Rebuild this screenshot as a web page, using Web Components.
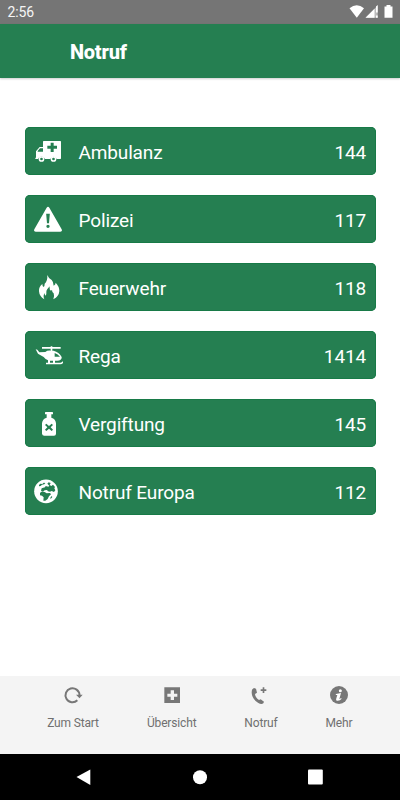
<!DOCTYPE html>
<html lang="de"><head><meta charset="utf-8"><title>Notruf</title>
<style>html,body{margin:0;height:100%;background:#fff;font-family:Roboto,sans-serif}</style></head>
<body><emergency-app></emergency-app>
<script>
const icons = {
 ambulance:`<path fill-rule="evenodd" d="M71 63H121Q123 63 123 65V115Q123 117 121 117H110A10 10 0 0 0 91 117H75A11 11 0 0 0 54 117H46V113H48V94L59 81H69V65Q69 63 71 63ZM92 68V77H82V86H92V96H101V86H111V77H101V68ZM60 85L53 93V95H69V85Z"/><g fill="none" stroke="#fff" stroke-width="4.5"><circle cx="64.5" cy="117" r="6.3"/><circle cx="100.500" cy="117" r="6.3"/></g>`,
 warning:`<path fill-rule="evenodd" d="M80 59Q84 53 88 59L125 124Q128 131 121 131H47Q40 131 43 124ZM78.500 77L81 106H87L89.500 77ZM84 110A5 5 0 1 0 84 120A5 5 0 1 0 84 110Z"/>`,
 fire:`<path d="M82 57Q86 68 95 72Q101 78 101 89Q107 86 107 80Q118 91 118 105Q117 121 100 130Q104 120 101 112Q96 109 96 102Q89 107 89 97Q88 94 90 91Q79 100 79 108Q80 115 77 119Q73 116 74 111Q68 119 73 130Q58 121 57 106Q56 92 67 84Q67 91 71 93Q74 91 74 83Q83 76 82 57Z"/>`,
 helicopter:`<path fill-rule="evenodd" d="M66 69H92V67H97V69H122V74H97V80H101Q117 84 125 99Q126 109 112 110H105V116H121Q126 116 128 112L130 115Q128 121 121 121H78V116H84V109Q77 107 71 99L54 89L47 76L52 77L58 85L76 84Q82 79 92 80V74H66ZM90 110V116H99V110ZM104 87V98H120Q114 90 104 87Z"/>`,
 poison:`<path fill-rule="evenodd" d="M77 60Q75 60 75 62V67H80V77Q67 81 66 94V125Q67 131 73 131H102Q108 131 108 125V94Q107 81 94 77V67H99V62Q99 60 97 60ZM79 95L87 102L95 95L99 99L92 106L99 113L95 117L87 110L79 117L75 113L82 106L75 99Z"/>`,
 globe:`<circle cx="78" cy="94" r="35.5"/><path fill="#257f51" d="M57 75L61 71L67 72L71 68L76 69L73 73L66 74L62 78L57 79ZM82 71L86 67L92 69L89 75L94 78L99 74L105 81L103 85L106 91L102 96L95 93L90 95L84 94L81 90L74 91L69 95L63 92L65 85L75 82L77 78L85 80L88 77ZM60 99L64 95L74 96L80 100L90 99L93 103L87 109L83 117L76 122L70 122L71 112L66 107L60 106ZM91 113L95 108L97 111L92 117Z"/>`,
 restart:`<path fill="none" stroke="#777" stroke-width="6" d="M142 91A21 21 0 1 1 148.500 75"/><path fill="#777" d="M138 74H158L148.500 85Z"/>`,
 plus:`<path fill="#777" fill-rule="evenodd" d="M402 52H449V99H402ZM421 61V71H411V80H421V90H431V80H441V71H431V61Z"/>`,
 phone:`<path fill="#777" d="M97 58L102 54L108 56L111 68L105 72Q106 83 117 90L122 88L132 95L130 100Q124 104 115 99Q96 87 95 68Q95 61 97 58ZM128 52H133V58H139V63H133V69H128V63H122V58H128Z"/>`,
 info:`<circle cx="357" cy="75" r="27" fill="#777"/><circle cx="361" cy="62" r="4.500"/><path d="M348 72L363 69L358 87Q360 87 363 84L365 86Q359 94 350 92Q347 90 349 85L352 75H347Z"/>`
};
class AppIcon extends HTMLElement{connectedCallback(){
 const size=this.getAttribute('size')||30;
 this.attachShadow({mode:'open'}).innerHTML=`<style>:host{display:block;flex:none;width:${size}px;height:${size}px}svg{display:block;width:100%;height:100%;fill:#fff}</style><svg viewBox="${this.getAttribute('box')||'39 54 90 90'}">${icons[this.getAttribute('name')]}</svg>`}}
customElements.define('app-icon',AppIcon);
class StatusBar extends HTMLElement{connectedCallback(){this.attachShadow({mode:'open'}).innerHTML=`<style>
:host{display:flex;justify-content:space-between;height:23.5px;background:#757575;color:#f5f5f5;font-size:14px;letter-spacing:-.15px;line-height:24px;padding-left:7.5px;box-sizing:border-box}svg{display:block;width:60px;height:23px}</style><span>2:56</span>
<svg viewBox="340 0 60 23"><path fill="#fff" d="M349.500 8.200Q356.800 2.500 364 8.200L356.800 17.700Z"/><path fill="#bbb" d="M377.700 5.500V17.700H365.500Z"/><path fill="#fff" d="M374.500 8.700V17.700H365.500ZM376 6.500L377.700 5V12.500H376ZM376 15.500H377.700V17.700H376ZM384.500 6.500H386.500V5H390.500V6.500H392.500V17.700H384.500Z"/></svg>`}}
customElements.define('status-bar',StatusBar);
class AppHeader extends HTMLElement{connectedCallback(){this.attachShadow({mode:'open'}).innerHTML=`<style>
:host{display:block;height:54px;background:#257f51;color:#fff;padding-left:70px;font-size:20px;font-weight:800;letter-spacing:-.25px;line-height:56px;box-shadow:0 1px 2px #0003}</style><slot></slot>`}}
customElements.define('app-header',AppHeader);
class CallButton extends HTMLElement{connectedCallback(){this.attachShadow({mode:'open'}).innerHTML=`<style>
:host{display:flex;box-sizing:border-box;height:48.500px;padding:0 9.500px 0 8px;border-radius:5px;background:#257f51;color:#fff;font-size:19px;letter-spacing:-.14px;line-height:51px;box-shadow:inset 0 0 0 1px #187a47}
app-icon{margin:11px 16px 0 0}.label{flex:1}</style><app-icon name="${this.getAttribute('icon')}"></app-icon><span class="label"><slot></slot></span><span>${this.getAttribute('number')}</span>`}}
customElements.define('call-button',CallButton);
class TabItem extends HTMLElement{connectedCallback(){this.attachShadow({mode:'open'}).innerHTML=`<style>
:host{display:flex;flex-direction:column;align-items:center;color:#707070;font-size:12px;letter-spacing:-.15px;line-height:16px;white-space:nowrap}app-icon{margin-bottom:10px}</style><app-icon size="20" name="${this.getAttribute('icon')}" box="${this.getAttribute('box')}"></app-icon><span><slot></slot></span>`}}
customElements.define('tab-item',TabItem);
class TabBar extends HTMLElement{connectedCallback(){this.attachShadow({mode:'open'}).innerHTML=`<style>
:host{display:grid;grid-template-columns:100px 97.400px 81.200px 74.800px;padding:9.500px 0 0 23px;height:78px;box-sizing:border-box;background:#f4f4f4}</style><slot></slot>`}}
customElements.define('tab-bar',TabBar);
class SystemBar extends HTMLElement{connectedCallback(){this.attachShadow({mode:'open'}).innerHTML=`<style>
:host{display:block;height:46.500px;background:#000}svg{display:block}</style><svg width="400" height="46" viewBox="0 753.5 400 46" fill="#fff"><path d="M76.500 776.500L90.300 769V784.500Z"/><circle cx="200" cy="776.700" r="7"/><rect x="308" y="769" width="14.800" height="15" rx="1"/></svg>`}}
customElements.define('system-bar',SystemBar);
class EmergencyApp extends HTMLElement{connectedCallback(){this.attachShadow({mode:'open'}).innerHTML=`<style>
:host{display:flex;flex-direction:column;height:800px;width:400px;overflow:hidden;background:#fff}main{flex:1;display:flex;flex-direction:column;gap:19.600px;padding:49px 24.500px 0}</style>
<status-bar></status-bar><app-header>Notruf</app-header><main>
<call-button icon="ambulance" number="144">Ambulanz</call-button><call-button icon="warning" number="117">Polizei</call-button><call-button icon="fire" number="118">Feuerwehr</call-button><call-button icon="helicopter" number="1414">Rega</call-button><call-button icon="poison" number="145">Vergiftung</call-button><call-button icon="globe" number="112">Notruf Europa</call-button></main>
<tab-bar><tab-item icon="restart" box="99 45 60 60">Zum Start</tab-item><tab-item icon="plus" box="395 45 60 60">Übersicht</tab-item><tab-item icon="phone" box="93 45 60 60">Notruf</tab-item><tab-item icon="info" box="327 45 60 60">Mehr</tab-item></tab-bar><system-bar></system-bar>`}}
customElements.define('emergency-app',EmergencyApp);
</script></body></html>
